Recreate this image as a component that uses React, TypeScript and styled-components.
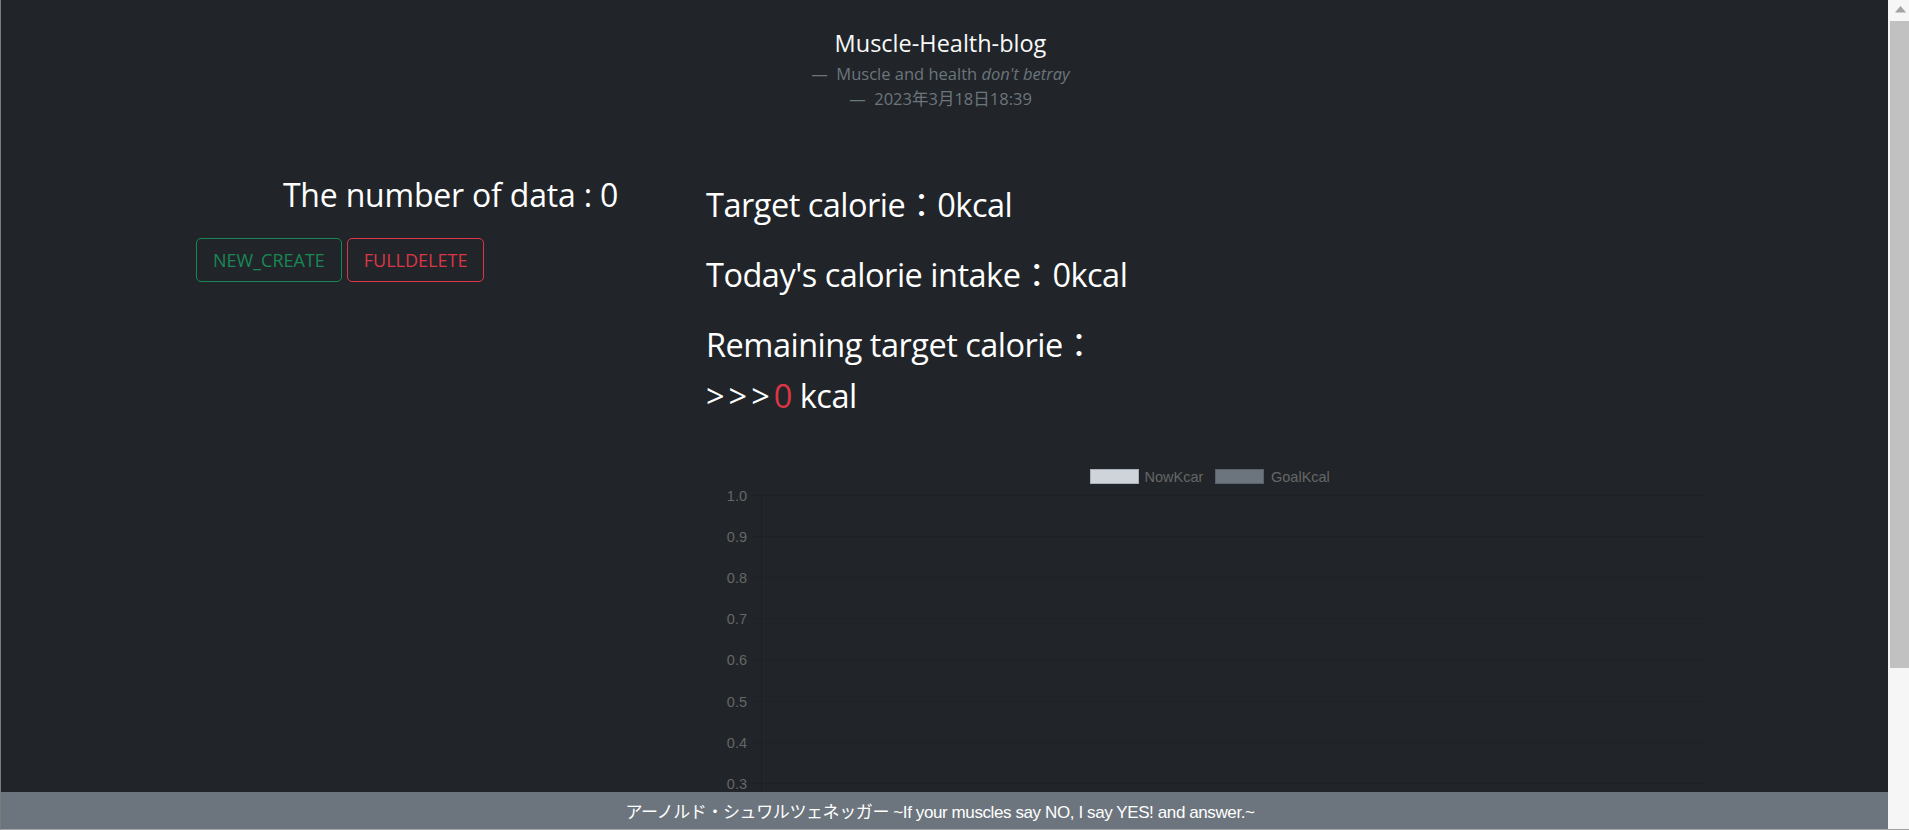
import React from "react";
import styled, { createGlobalStyle } from "styled-components";

const GlobalStyle = createGlobalStyle`
  html, body {
    margin: 0;
    padding: 0;
    background: #212529;
    overflow: hidden;
  }
  body {
    font-family: "Open Sans", "Noto Sans CJK JP", sans-serif;
    color: #fff;
  }
  * { box-sizing: border-box; }
`;

const Frame = styled.div`
  display: flex;
  width: 100vw;
  height: 100vh;
  border-left: 1px solid #7b7b7b;
  border-bottom: 1px solid #a3a3a3;
  background: #212529;
`;

const Viewport = styled.div`
  flex: 1;
  min-width: 0;
  display: flex;
  flex-direction: column;
  overflow: hidden;
`;

const Page = styled.div`
  flex: 1;
  min-height: 0;
  overflow: hidden;
`;

const Header = styled.header`
  padding: 28px 8px 0 0;
  text-align: center;
`;

const BlogTitle = styled.h1`
  margin: 0;
  font-size: 23.5px;
  line-height: 30px;
  font-weight: 400;
  color: #f8f9fa;
`;

const CaptionGroup = styled.div`
  margin-top: 3px;
`;

const Caption = styled.p`
  margin: 0;
  font-size: 16.5px;
  line-height: 25px;
  color: #6c757d;
  &::before {
    content: "\\2014\\00a0\\00a0";
  }
`;

const Cite = styled.cite`
  font-style: italic;
`;

const Board = styled.main`
  display: flex;
  align-items: flex-start;
  padding: 64px 0 0 195px;
`;

const Summary = styled.section`
  flex: none;
  width: 507px;
`;

const CountTitle = styled.h2`
  margin: 0;
  text-align: center;
  font-size: 32px;
  line-height: 38px;
  font-weight: 400;
  letter-spacing: -0.2px;
  color: #fff;
  transform: translate(1px, 1px);
`;

const ButtonRow = styled.div`
  display: flex;
  gap: 5px;
  margin-top: 25px;
`;

const OutlineButton = styled.button<{ $tone: string }>`
  height: 44px;
  padding: 0 16px;
  border: 1px solid ${(p) => p.$tone};
  border-radius: 5px;
  background: transparent;
  color: ${(p) => p.$tone};
  font-family: "Open Sans", sans-serif;
  font-size: 18px;
  line-height: 1;
  cursor: pointer;
`;

const Stats = styled.section`
  flex: none;
  width: 1008px;
  margin-left: 3px;
  padding-top: 3.5px;
`;

const StatLine = styled.p`
  margin: 0 0 19px;
  font-size: 32.5px;
  line-height: 51px;
  letter-spacing: -0.5px;
  color: #fff;
  &:last-of-type {
    margin-bottom: 0;
  }
`;

const Arrows = styled.span`
  letter-spacing: 4px;
`;

const Danger = styled.span`
  color: #dc3545;
`;

const ChartBox = styled.div`
  margin-top: 35px;
  width: 1008px;
  height: 336px;
`;

const Footer = styled.footer`
  flex: none;
  height: 37px;
  display: flex;
  align-items: center;
  justify-content: center;
  padding-right: 9px;
  background: #6c757d;
  color: #fff;
  font-family: "Liberation Sans", "Noto Sans CJK JP", sans-serif;
  font-size: 17px;
  letter-spacing: -0.4px;
  white-space: nowrap;
`;

const ScrollRail = styled.div`
  flex: none;
  width: 21px;
  background: #f6f6f6;
  display: flex;
  flex-direction: column;
`;

const ScrollButton = styled.div`
  height: 21px;
  display: flex;
  justify-content: center;
  padding: 6px 0 0 4px;
`;

const ScrollThumb = styled.div`
  margin-left: 2px;
  height: 647px;
  background: #c1c1c1;
`;

const ticks = [1.0, 0.9, 0.8, 0.7, 0.6, 0.5, 0.4, 0.3];

function CalorieChart() {
  const top = 38.5;
  const step = 41.2;
  return (
    <svg width="1008" height="336" viewBox="0 0 1008 336">
      <g fontFamily="Liberation Sans, Arial, sans-serif" fontSize="14.5" fill="#666">
        <rect x="384.5" y="13.5" width="48" height="14" fill="#ced4da" stroke="#a9b0b7" />
        <text x="438.5" y="21" dominantBaseline="central">NowKcar</text>
        <rect x="509.5" y="13.5" width="48" height="14" fill="#6c757d" stroke="#59616a" />
        <text x="565" y="21" dominantBaseline="central">GoalKcal</text>
      </g>
      {ticks.map((t, i) => {
        const y = Math.round(top + i * step) + 0.5;
        return (
          <g key={t}>
            <line x1="45" x2="1000" y1={y} y2={y} stroke="rgba(0,0,0,0.07)" />
            <text
              x="41"
              y={y}
              textAnchor="end"
              dominantBaseline="central"
              fontFamily="Liberation Sans, Arial, sans-serif"
              fontSize="14.5"
              fill="#666"
            >
              {t.toFixed(1)}
            </text>
          </g>
        );
      })}
      <line x1="55.5" x2="55.5" y1={top} y2="336" stroke="rgba(0,0,0,0.16)" />
    </svg>
  );
}

export default function App() {
  return (
    <>
      <GlobalStyle />
      <Frame>
        <Viewport>
          <Page>
            <Header>
              <BlogTitle>Muscle-Health-blog</BlogTitle>
              <CaptionGroup>
                <Caption>
                  Muscle and health <Cite>don't betray</Cite>
                </Caption>
                <Caption>2023年3月18日18:39</Caption>
              </CaptionGroup>
            </Header>
            <Board>
              <Summary>
                <CountTitle>The number of data : 0</CountTitle>
                <ButtonRow>
                  <OutlineButton $tone="#198754">NEW_CREATE</OutlineButton>
                  <OutlineButton $tone="#dc3545">FULLDELETE</OutlineButton>
                </ButtonRow>
              </Summary>
              <Stats>
                <StatLine>Target calorie：0kcal</StatLine>
                <StatLine>Today's calorie intake：0kcal</StatLine>
                <StatLine>
                  Remaining target calorie：
                  <br />
                  <Arrows>&gt;&gt;&gt;</Arrows>
                  <Danger>0</Danger> kcal
                </StatLine>
                <ChartBox>
                  <CalorieChart />
                </ChartBox>
              </Stats>
            </Board>
          </Page>
          <Footer>アーノルド・シュワルツェネッガー ~If your muscles say NO, I say YES! and answer.~</Footer>
        </Viewport>
        <ScrollRail>
          <ScrollButton>
            <svg width="11" height="7" viewBox="0 0 11 7">
              <polygon points="5.5,0 11,6.5 0,6.5" fill="#a3a3a3" />
            </svg>
          </ScrollButton>
          <ScrollThumb />
        </ScrollRail>
      </Frame>
    </>
  );
}
